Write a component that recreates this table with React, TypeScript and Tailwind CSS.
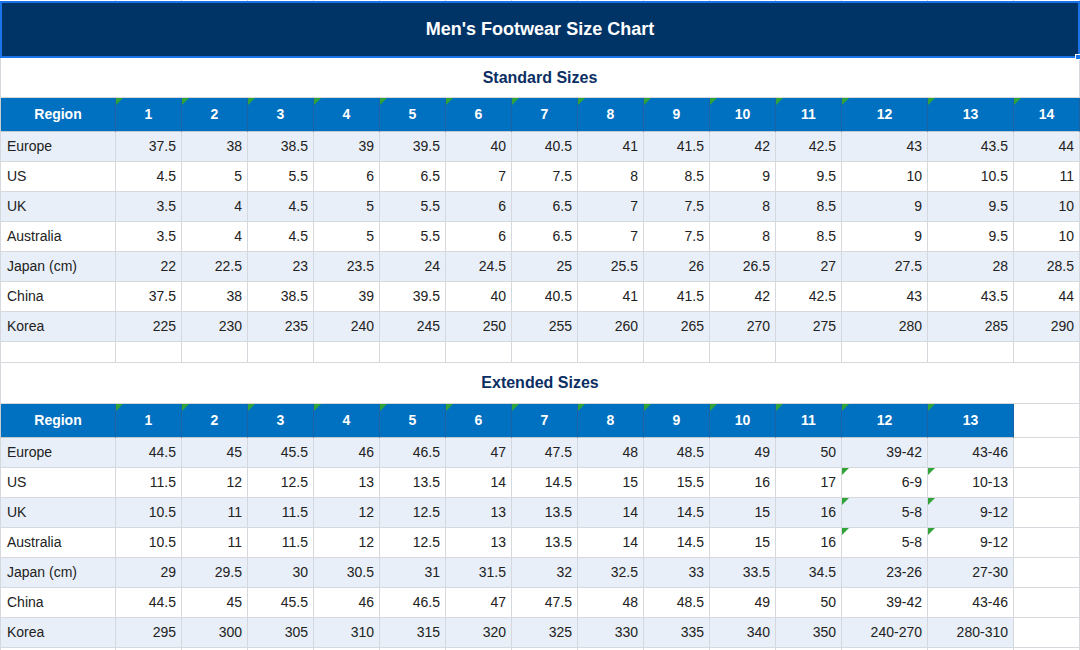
import React from "react";

const COLS = "grid grid-cols-[116px_repeat(11,66px)_86px_86px_66px]";

const std: string[][] = [
  ["Europe", "37.5", "38", "38.5", "39", "39.5", "40", "40.5", "41", "41.5", "42", "42.5", "43", "43.5", "44"],
  ["US", "4.5", "5", "5.5", "6", "6.5", "7", "7.5", "8", "8.5", "9", "9.5", "10", "10.5", "11"],
  ["UK", "3.5", "4", "4.5", "5", "5.5", "6", "6.5", "7", "7.5", "8", "8.5", "9", "9.5", "10"],
  ["Australia", "3.5", "4", "4.5", "5", "5.5", "6", "6.5", "7", "7.5", "8", "8.5", "9", "9.5", "10"],
  ["Japan (cm)", "22", "22.5", "23", "23.5", "24", "24.5", "25", "25.5", "26", "26.5", "27", "27.5", "28", "28.5"],
  ["China", "37.5", "38", "38.5", "39", "39.5", "40", "40.5", "41", "41.5", "42", "42.5", "43", "43.5", "44"],
  ["Korea", "225", "230", "235", "240", "245", "250", "255", "260", "265", "270", "275", "280", "285", "290"],
];

const ext: string[][] = [
  ["Europe", "44.5", "45", "45.5", "46", "46.5", "47", "47.5", "48", "48.5", "49", "50", "39-42", "43-46"],
  ["US", "11.5", "12", "12.5", "13", "13.5", "14", "14.5", "15", "15.5", "16", "17", "6-9", "10-13"],
  ["UK", "10.5", "11", "11.5", "12", "12.5", "13", "13.5", "14", "14.5", "15", "16", "5-8", "9-12"],
  ["Australia", "10.5", "11", "11.5", "12", "12.5", "13", "13.5", "14", "14.5", "15", "16", "5-8", "9-12"],
  ["Japan (cm)", "29", "29.5", "30", "30.5", "31", "31.5", "32", "32.5", "33", "33.5", "34.5", "23-26", "27-30"],
  ["China", "44.5", "45", "45.5", "46", "46.5", "47", "47.5", "48", "48.5", "49", "50", "39-42", "43-46"],
  ["Korea", "295", "300", "305", "310", "315", "320", "325", "330", "335", "340", "350", "240-270", "280-310"],
];

function Tri() {
  return (
    <span className="absolute left-0 top-0 w-0 h-0 border-t-[7px] border-r-[7px] border-t-[#31a339] border-r-transparent" />
  );
}

function HeaderRow({ count }: { count: number }) {
  const cells = [];
  for (let i = 0; i < 15; i++) {
    if (i === 0) {
      cells.push(
        <div key={i} className="relative flex items-center justify-center bg-[#0070c0] border-l border-l-[#c9ccd1] border-r border-r-[#1a62a3] border-b border-b-[#c4c7cc] text-white font-bold text-[14px]">
          Region
        </div>
      );
    } else if (i <= count) {
      cells.push(
        <div key={i} className="relative flex items-center justify-center bg-[#0070c0] border-r border-r-[#1a62a3] border-b border-b-[#c4c7cc] text-white font-bold text-[14px]">
          <Tri />
          {i}
        </div>
      );
    } else {
      cells.push(<div key={i} className="bg-white border-r border-b border-[#d5d8dc]" />);
    }
  }
  return <div className={`${COLS} h-[34px]`}>{cells}</div>;
}

function DataRows({ rows, flagged }: { rows: string[][]; flagged?: (r: number, c: number) => boolean }) {
  return (
    <>
      {rows.map((row, r) => {
        const shaded = r % 2 === 0;
        const cells = [];
        for (let c = 0; c < 15; c++) {
          const v = row[c];
          const bg = v === undefined ? "bg-white" : shaded ? "bg-[#e9eff8]" : "bg-white";
          if (c === 0) {
            cells.push(
              <div key={c} className={`relative flex items-center pl-[6px] border-l border-r border-b border-[#d5d8dc] ${bg} text-[14px] text-[#222222]`}>
                {v}
              </div>
            );
          } else {
            cells.push(
              <div key={c} className={`relative flex items-center justify-end pr-[5px] border-r border-b border-[#d5d8dc] ${bg} text-[14px] text-[#222222]`}>
                {flagged && flagged(r, c) ? <Tri /> : null}
                {v ?? ""}
              </div>
            );
          }
        }
        return (
          <div key={r} className={`${COLS} h-[30px]`}>
            {cells}
          </div>
        );
      })}
    </>
  );
}

function BlankRow({ h }: { h: string }) {
  const cells = [];
  for (let c = 0; c < 15; c++) {
    cells.push(
      <div key={c} className={`bg-white border-r border-b border-[#d5d8dc] ${c === 0 ? "border-l" : ""}`} />
    );
  }
  return <div className={`${COLS} ${h}`}>{cells}</div>;
}

export default function App() {
  return (
    <div className="w-[1080px] h-[650px] overflow-hidden bg-white font-['Liberation_Sans',Arial,sans-serif]">
      <div className={`${COLS} h-[1px]`}>
        {Array.from({ length: 15 }).map((_, c) => (
          <div key={c} className="border-r border-[#d5d8dc]" />
        ))}
      </div>
      <div className="relative h-[57px] bg-[#003366] border-2 border-[#1a73e8] flex items-center justify-center">
        <span className="text-white font-bold text-[18px]">Men's Footwear Size Chart</span>
        <span className="absolute right-[-3px] bottom-[-4px] w-[6px] h-[6px] bg-[#1a73e8] border border-white" />
      </div>
      <div className="h-[40px] bg-white border-l border-r border-b border-[#d5d8dc] flex items-center justify-center">
        <span className="text-[#0b2e63] font-bold text-[16px]">Standard Sizes</span>
      </div>
      <HeaderRow count={14} />
      <DataRows rows={std} />
      <BlankRow h="h-[21px]" />
      <div className="h-[41px] bg-white border-l border-r border-b border-[#d5d8dc] flex items-center justify-center">
        <span className="text-[#0b2e63] font-bold text-[16px]">Extended Sizes</span>
      </div>
      <HeaderRow count={13} />
      <DataRows rows={ext} flagged={(r, c) => (r === 1 || r === 2 || r === 3) && (c === 12 || c === 13)} />
      <BlankRow h="h-[30px]" />
    </div>
  );
}
